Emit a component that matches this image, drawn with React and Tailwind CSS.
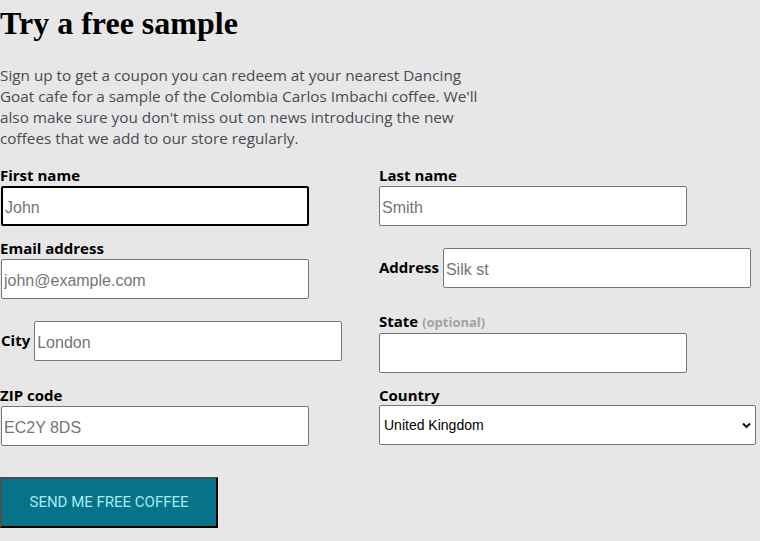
import React from "react";

const sans = "font-['Open_Sans',sans-serif]";
const inputCls =
  "block h-[40px] w-[308px] rounded-[2px] border border-[#767676] bg-white px-[2px] pt-[3px] font-['Liberation_Sans',Arial,sans-serif] text-[16px] text-black placeholder:text-[#757575] outline-none";
const labelCls = `${sans} block text-[15px] font-bold leading-[15px] mb-[3px] text-black`;

export default function App() {
  return (
    <div className="min-h-[541px] w-[760px] overflow-hidden bg-[#e7e7e7]">
      <h1 className="pt-[5px] font-['Liberation_Serif',serif] text-[32px] font-bold leading-[37px] text-black">
        Try a free sample
      </h1>
      <p className={`${sans} mt-[23px] w-[500px] text-[15.3px] leading-[21px] text-[#4a4a55]`}>
        Sign up to get a coupon you can redeem at your nearest Dancing
        <br />
        Goat cafe for a sample of the Colombia Carlos Imbachi coffee. We'll
        <br />
        also make sure you don't miss out on news introducing the new
        <br />
        coffees that we add to our store regularly.
      </p>
      <form className="mt-[19px] grid grid-cols-[379px_1fr] gap-y-[15px]">
        <div>
          <label className={labelCls}>First name</label>
          <input
            className={`${inputCls} ml-[1px] border-2 border-black`}
            placeholder="John"
          />
        </div>
        <div>
          <label className={labelCls}>Last name</label>
          <input className={inputCls} placeholder="Smith" />
        </div>

        <div>
          <label className={labelCls}>Email address</label>
          <input className={`${inputCls} ml-[1px]`} placeholder="john@example.com" />
        </div>
        <div className="flex items-start">
          <label className={`${labelCls} mt-[19px] mr-[4px]`}>Address</label>
          <input className={`${inputCls} mt-[7px]`} placeholder="Silk st" />
        </div>

        <div className="flex items-start">
          <label className={`${labelCls} mt-[19px] ml-[1px] mr-[4px]`}>City</label>
          <input className={`${inputCls} mt-[7px]`} placeholder="London" />
        </div>
        <div>
          <label className={labelCls}>
            State{" "}
            <span className="text-[13px] font-bold text-[#a3a3a3]">(optional)</span>
          </label>
          <input className={inputCls} />
        </div>

        <div>
          <label className={labelCls}>ZIP code</label>
          <input className={`${inputCls} ml-[1px]`} placeholder="EC2Y 8DS" />
        </div>
        <div>
          <label className={labelCls}>Country</label>
          <div className="relative mt-[-1px] w-[377px]">
            <select className="block h-[40px] w-[377px] appearance-none rounded-[2px] border border-[#767676] bg-white pl-[4px] font-['Liberation_Sans',Arial,sans-serif] text-[14px] text-black outline-none">
              <option>United Kingdom</option>
            </select>
            <svg
              className="pointer-events-none absolute right-[5px] top-[17px]"
              width="9"
              height="7"
              viewBox="0 0 9 7"
            >
              <path d="M1 1.5 L4.5 5 L8 1.5" stroke="#111" strokeWidth="2" fill="none" />
            </svg>
          </div>
        </div>
      </form>
      <button className="mt-[31px] block h-[51px] w-[218px] border-2 border-t-[#4d4d4d] border-l-[#4d4d4d] border-b-black border-r-black bg-[#077389] pb-[1px] font-['Roboto',sans-serif] text-[15px] text-[#a6e9f2]">
        SEND ME FREE COFFEE
      </button>
    </div>
  );
}
